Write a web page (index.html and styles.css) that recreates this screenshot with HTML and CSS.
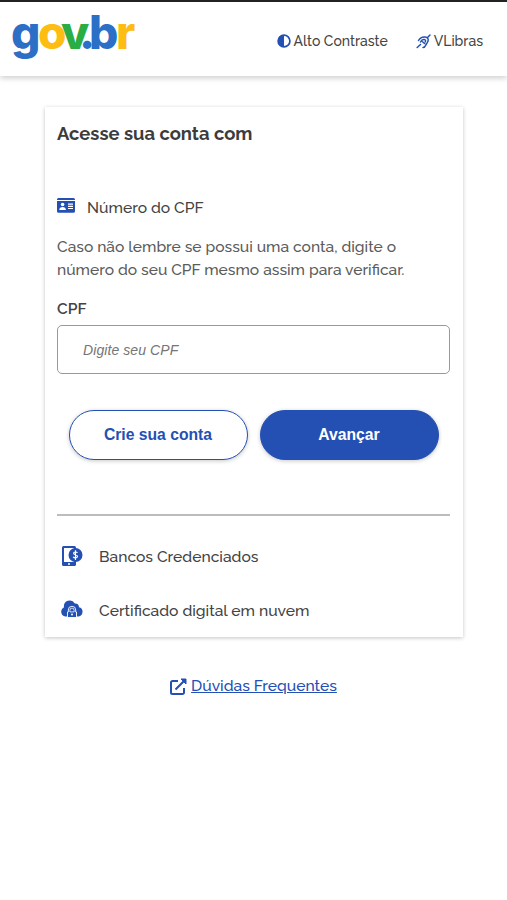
FILE: index.html
```html
<!DOCTYPE html>
<html lang="pt-BR">
<head>
<meta charset="utf-8">
<meta name="viewport" content="width=device-width, initial-scale=1">
<title>gov.br - Acesse sua conta</title>
<link rel="stylesheet" href="styles.css">
</head>
<body>
<header class="header">
  <svg class="logo" width="126" height="50" viewBox="0 0 126 50" role="img" aria-label="gov.br">
    <text y="38"><tspan class="blue" x="-1">g</tspan><tspan class="yellow" x="26">o</tspan><tspan class="green" x="49">v</tspan><tspan class="blue" x="67">.</tspan><tspan class="blue" x="77">b</tspan><tspan class="yellow" x="104">r</tspan></text>
  </svg>
  <nav class="tools">
    <a class="tool contrast"><svg width="14" height="14" viewBox="0 0 14 14"><circle cx="7" cy="7" r="5.900" fill="none" stroke="currentColor" stroke-width="1.700"/><path d="M7 1v12A6 6 0 0 1 7 1z" fill="currentColor"/></svg><span>Alto Contraste</span></a>
    <a class="tool vlibras"><svg width="15" height="15" viewBox="0 0 15 15" fill="none" stroke="currentColor" stroke-width="1.500" stroke-linecap="round"><path d="M1.200 13.500 4.500 10.500M11.500 3.500 14 1M6.500 7.800l2 1.700M2.500 6.500C4 3.800 6.800 2.700 9.300 3c2.900.4 3.500 2.700 2.300 5-.8 1.500-1.400 2-1.900 3.300-.5 1.400-1.400 2.200-2.700 2.200M4.500 8C5.300 6.200 6.900 5.300 8.300 5.500c1.300.2 1.500 1.300.9 2.500"/></svg><span>VLibras</span></a>
  </nav>
</header>
<main class="main">
  <section class="card">
    <h1 class="title">Acesse sua conta com</h1>
    <div class="method">
      <svg width="18" height="15" viewBox="0 0 18 15"><path fill="currentColor" d="M1.500 0h15A1.500 1.500 0 0 1 18 1.500V2H0v-.5A1.500 1.500 0 0 1 1.500 0zM0 3h18v10.300a1.500 1.500 0 0 1-1.500 1.500h-15A1.500 1.500 0 0 1 0 13.300z"/><circle cx="5.600" cy="6.500" r="1.800" fill="#fff"/><path d="M2.300 12c0-2 1.200-3 3.300-3s3.300 1 3.300 3zM11 5.500h5v1.200h-5zM11 7.700h5v1.200h-5zM11 9.900h5v1h-5z" fill="#fff"/></svg>
      <span>Número do CPF</span>
    </div>
    <p class="hint">Caso não lembre se possui uma conta, digite o<br>número do seu CPF mesmo assim para verificar.</p>
    <label class="label" for="cpf">CPF</label>
    <input class="input" id="cpf" type="text" placeholder="Digite seu CPF">
    <div class="actions">
      <button class="btn outline">Crie sua conta</button>
      <button class="btn solid">Avançar</button>
    </div>
    <hr class="rule">
    <ul class="options">
      <li class="option"><svg width="22" height="22" viewBox="0 0 22 22"><path d="M2.500 1h11A1.500 1.500 0 0 1 15 2.500v17a1.500 1.500 0 0 1-1.500 1.500h-11A1.500 1.500 0 0 1 1 19.500v-17A1.500 1.500 0 0 1 2.500 1z" fill="currentColor"/><path d="M3 3h10v14H3z" fill="#fff"/><circle cx="8" cy="19" r="1" fill="#fff"/><circle cx="14.500" cy="10" r="7" fill="currentColor"/><path d="M16.500 7.800c-.6-1-3.900-1.300-3.900.5s3.900 1 3.900 3-3.400 1.900-4.300.6M14.500 5.300v9.600" fill="none" stroke="#fff" stroke-width="1.200"/></svg><span>Bancos Credenciados</span></li>
      <li class="option"><svg width="22" height="22" viewBox="0 0 22 22"><path d="M5 17.500A4.900 4.900 0 0 1 3 8.200 5.800 5.800 0 0 1 13.800 4.500c2.600-.3 4.300 1.500 4.200 3.800a4.700 4.700 0 0 1-.5 9.200z" fill="currentColor"/><path d="M6.500 18.500V13h.8v-2a3.700 3.700 0 0 1 7.400 0v2h.8v5.500z" fill="currentColor" stroke="#fff" stroke-width=".9"/><path d="M8.900 12.900V11.200a2.100 2.100 0 0 1 4.200 0v1.700z" fill="none" stroke="#fff" stroke-width=".8"/><circle cx="11" cy="15.500" r="1" fill="#fff"/></svg><span>Certificado digital em nuvem</span></li>
    </ul>
  </section>
  <a class="faq"><svg width="17" height="17" viewBox="0 0 17 17" fill="none" stroke="currentColor" stroke-width="2" stroke-linejoin="round"><path d="M8 3H2.500A1.500 1.500 0 0 0 1 4.500v10A1.500 1.500 0 0 0 2.500 16h10a1.500 1.500 0 0 0 1.500-1.500V10M5.500 11.500 14 3"/><path d="M11 1h5v5z" fill="currentColor" stroke-width="1"/></svg><span>Dúvidas Frequentes</span></a>
</main>
</body>
</html>
```
FILE: styles.css
```css
* { box-sizing: border-box; }
body { margin: 0; background: #fff; color: #444; font-family: Raleway, Lato, sans-serif; font-size: 15.65px; font-weight: 500; }
svg { flex: none; display: block; }
.header { height: 76px; border-top: 2px solid #222; padding: 9px 24px 0 12px; display: flex; justify-content: space-between; align-items: flex-start; box-shadow: 0 2px 6px rgba(0,0,0,.2); }
.logo { overflow: visible; font: 800 46px Inter, sans-serif; }
.blue { fill: #2c6fc7; }
.yellow { fill: #fdbd12; }
.green { fill: #2aae43; }
.tools { display: flex; gap: 28px; padding-top: 20px; }
.tool { display: flex; align-items: center; gap: 3px; font-size: 14px; line-height: 20px; }
.tool svg, .method svg, .option svg, .faq { color: #2450b4; }
.main { display: flex; flex-direction: column; align-items: center; padding-top: 31px; }
.card { width: 418px; height: 530px; padding: 0 13px 0 12px; margin-left: 1px; background: #fff; box-shadow: 0 1px 4px rgba(0,0,0,.23); }
.title { margin: 16px 0 0; font-size: 18.4px; line-height: 22px; font-weight: 700; color: #3c3c3c; }
.method { display: flex; align-items: center; gap: 12px; height: 24px; margin-top: 50px; }
.method svg { margin-top: -3px; }
.hint { margin: 16px 0 0; line-height: 23px; color: #5c5c5c; font-size: 15.6px; }
.label { display: block; margin-top: 18px; line-height: 20px; font-weight: 600; }
.input { display: block; width: 393px; height: 49px; margin-top: 6px; padding: 0 25px; border: 1px solid #999; border-radius: 5px; font: italic 14px "Liberation Sans", sans-serif; letter-spacing: .08px; }
.input::placeholder { color: #757575; opacity: 1; }
.actions { display: flex; justify-content: center; gap: 12px; margin-top: 36px; }
.btn { width: 179px; height: 50px; border-radius: 25px; border: 1px solid #2450b4; font: bold 15.7px "Liberation Sans", sans-serif; box-shadow: 0 1px 4px rgba(0,0,0,.22); }
.outline { background: #fff; color: #2450b4; }
.solid { background: #2450b4; color: #fff; }
.rule { margin: 54px 0 0; border: 0; height: 2px; background: #bcbcbc; }
.options { list-style: none; margin: 13px 0 0; padding: 0 4px; }
.option { display: flex; align-items: center; gap: 16px; height: 54px; }
.faq { display: flex; align-items: center; gap: 4px; margin-top: 38px; line-height: 22px; text-decoration: underline; }
```
